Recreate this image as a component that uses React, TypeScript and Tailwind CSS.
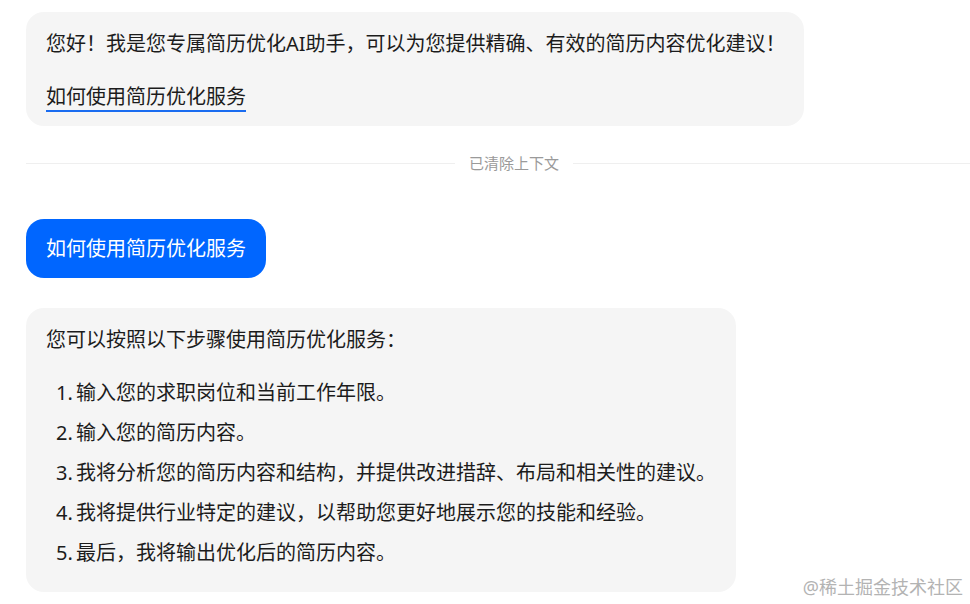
export default function App() {
  const steps = [
    '输入您的求职岗位和当前工作年限。',
    '输入您的简历内容。',
    '我将分析您的简历内容和结构，并提供改进措辞、布局和相关性的建议。',
    '我将提供行业特定的建议，以帮助您更好地展示您的技能和经验。',
    '最后，我将输出优化后的简历内容。',
  ]

  return (
    <div
      className="relative w-[970px] h-[604px] overflow-hidden bg-white text-[#1c1c1c]"
      style={{ fontFamily: '"Noto Sans", "Noto Sans CJK SC", sans-serif' }}
    >
      <div className="pl-[26px] pt-[12px]">
        {/* 欢迎消息 */}
        <div className="w-[778px] rounded-[18px] bg-[#f5f5f5] pl-[20px] pr-[16px] pt-[17px] pb-[14px] text-[20px] leading-[30px]">
          <p>您好！我是您专属简历优化AI助手，可以为您提供精确、有效的简历内容优化建议！</p>
          <p className="mt-[23px]">
            <span className="border-b-2 border-[#1a6cf0] cursor-pointer">如何使用简历优化服务</span>
          </p>
        </div>
      </div>

      {/* 分隔线 */}
      <div className="flex items-center pl-[26px] mt-[26px] h-[22px]">
        <div className="w-[429px] h-px bg-[#efefef]" />
        <span className="px-[14px] text-[15px] leading-[22px] text-[#9a9a9a]">已清除上下文</span>
        <div className="flex-1 h-px bg-[#efefef]" />
      </div>

      {/* 用户消息 */}
      <div className="pl-[26px] mt-[45px]">
        <div className="inline-flex h-[59px] items-center rounded-[18px] bg-[#0066ff] px-[20px] text-[20px] leading-[30px] text-white">
          如何使用简历优化服务
        </div>
      </div>

      {/* 回复 */}
      <div className="pl-[26px] mt-[30px]">
        <div className="w-[710px] rounded-[18px] bg-[#f5f5f5] pl-[20px] pr-[16px] pt-[17px] pb-[24px] text-[20px] leading-[30px]">
          <p>您可以按照以下步骤使用简历优化服务：</p>
          <ol className="mt-[23px] ml-[10px] flex flex-col gap-[10px]">
            {steps.map((s, i) => (
              <li key={i} className="flex">
                <span className="w-[20px] shrink-0">{i + 1}.</span>
                <span>{s}</span>
              </li>
            ))}
          </ol>
        </div>
      </div>

      <div className="absolute right-[7px] top-[574px] text-[18px] leading-[26px] text-[#b3b3b3]">
        @稀土掘金技术社区
      </div>
    </div>
  )
}
